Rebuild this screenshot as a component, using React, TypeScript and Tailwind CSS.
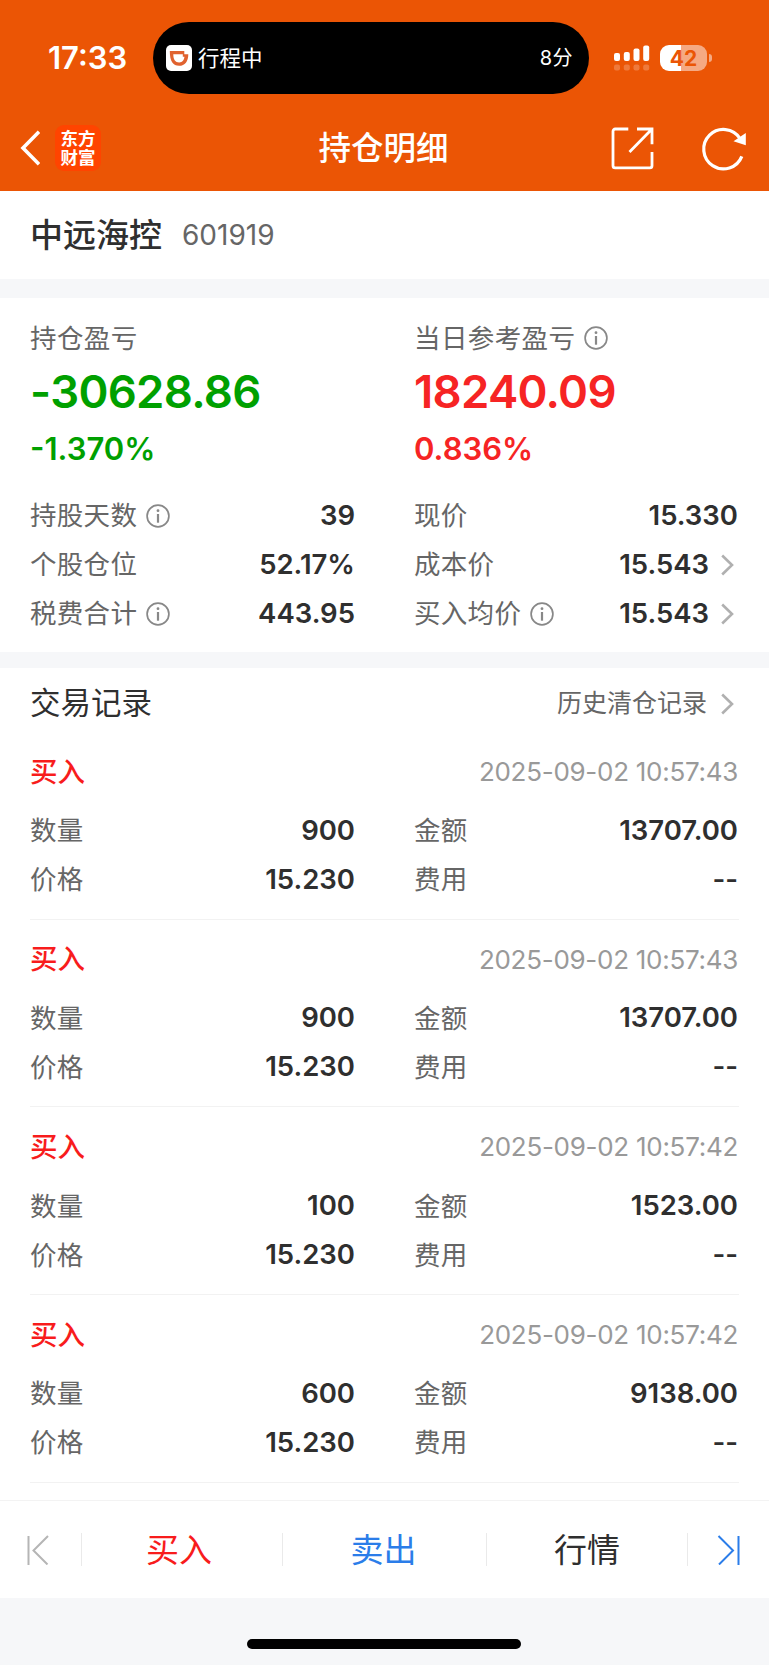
import { clsx } from "clsx";

type Stat = {
  label: string;
  value: string;
  info?: boolean;
  link?: boolean;
};

type Trade = {
  time: string;
  amount: string;
  price: string;
  total: string;
  fee: string;
};

const leftStats: Stat[] = [
  { label: "持股天数", value: "39", info: true },
  { label: "个股仓位", value: "52.17%" },
  { label: "税费合计", value: "443.95", info: true },
];

const rightStats: Stat[] = [
  { label: "现价", value: "15.330" },
  { label: "成本价", value: "15.543", link: true },
  { label: "买入均价", value: "15.543", info: true, link: true },
];

const trades: Trade[] = [
  { time: "2025-09-02 10:57:43", amount: "900", price: "15.230", total: "13707.00", fee: "--" },
  { time: "2025-09-02 10:57:43", amount: "900", price: "15.230", total: "13707.00", fee: "--" },
  { time: "2025-09-02 10:57:42", amount: "100", price: "15.230", total: "1523.00", fee: "--" },
  { time: "2025-09-02 10:57:42", amount: "600", price: "15.230", total: "9138.00", fee: "--" },
];

function InfoIcon() {
  return (
    <svg className="ml-[9px] h-6 w-6 text-[#888]" viewBox="0 0 24 24" fill="none" stroke="currentColor">
      <circle cx="12" cy="12" r="10.9" strokeWidth="1.7" />
      <path d="M12 10v8.7" strokeWidth="2.2" />
      <circle cx="12" cy="6.7" r="1.4" fill="currentColor" stroke="none" />
    </svg>
  );
}

function Chevron() {
  return (
    <svg className="mr-1 ml-3 h-[22px] w-[13px] text-[#b0b0b0]" viewBox="0 0 13 22" fill="none" stroke="currentColor" strokeWidth="2.6">
      <path d="M1.2 1.5 11 11 1.2 20.5" />
    </svg>
  );
}

function StatRow({ label, value, info, link }: Stat) {
  return (
    <div className="flex h-[49px] items-center">
      <span className="text-[26.5px] tracking-[0.3px] text-[#666]">{label}</span>
      {info && <InfoIcon />}
      <span className="ml-auto text-[27.5px] font-semibold text-[#2f2f2f]">{value}</span>
      {link && <Chevron />}
    </div>
  );
}

function StatusBar() {
  return (
    <div className="flex h-[94px] items-start pt-[22px]">
      <div className="flex h-[72px] w-[153px] items-center pb-[2px] pl-12 text-[31px] font-semibold">17:33</div>
      <div className="flex h-[72px] w-[436px] items-center rounded-full bg-black pr-4 pl-[13px]">
        <svg className="h-[26px] w-[26px]" viewBox="0 0 26 26">
          <rect width="26" height="26" rx="5" fill="#fff" />
          <path d="M3.8 6h14.5v3.2h4c0 7.2-3.2 11.6-9.2 11.6C7 20.8 3.8 16.4 3.8 6Z" fill="#e0622f" />
          <path d="M7.3 9.2h9.5v2.6h1.6c-.2 3.400-2 5.600-5.200 5.600C9.400 17.400 7.300 14.800 7.300 9.200Z" fill="#fff" />
        </svg>
        <span className="ml-[6px] pt-[2px] text-[21.5px]">行程中</span>
        <span className="ml-auto text-[20px] tracking-[0.5px]">8分</span>
      </div>
      <div className="flex h-[72px] items-center pl-[25px]">
        <svg className="h-[26px] w-9" viewBox="0 0 36 26" fill="#fff">
          <rect x="0" y="8" width="6" height="8" rx="2" />
          <rect x="9.8" y="7" width="6" height="9" rx="2" />
          <rect x="19.5" y="3.5" width="6" height="12.5" rx="2" />
          <rect x="29.2" y="0.5" width="6" height="15.5" rx="2" />
          <g opacity="0.22">
            <rect x="0" y="19.5" width="6" height="6" rx="2" />
            <rect x="9.8" y="19.5" width="6" height="6" rx="2" />
            <rect x="19.5" y="19.5" width="6" height="6" rx="2" />
            <rect x="29.2" y="19.5" width="6" height="6" rx="2" />
          </g>
        </svg>
        <div className="ml-[10px] flex h-[26px] w-[47px] items-center justify-center rounded-[9px] bg-[linear-gradient(90deg,#fff_44%,#f5a983_44%)] text-[21px] font-bold text-[#eb5505]">
          42
        </div>
        <div className="ml-[1.5px] h-2 w-[3px] rounded-r-full bg-[#f5a983]" />
      </div>
    </div>
  );
}

function NavBar() {
  return (
    <div className="grid h-[97px] grid-cols-[1fr_auto_1fr] items-center">
      <div className="flex items-center pt-[10px] pl-5">
        <svg className="h-9 w-5" viewBox="0 0 20 36" fill="none" stroke="#fff" strokeWidth="3.6">
          <path d="M19 1.8 3 18l16 16.2" />
        </svg>
        <div className="ml-[15px] flex h-[46px] w-[46px] flex-col items-center justify-center rounded-[9px] bg-[#ff4400] text-[17.5px] leading-[19px] font-bold">
          <span>东方</span>
          <span>财富</span>
        </div>
      </div>
      <h1 className="pt-[14px] pr-[2px] text-[32.5px] leading-none font-medium">持仓明细</h1>
      <div className="flex items-center justify-end gap-12 pt-[12px] pr-6">
        <svg className="h-[43px] w-[43px]" viewBox="0 0 43 43" fill="none" stroke="#fff" strokeWidth="2.8">
          <path d="M17.3 2H4.2A2.2 2.2 0 0 0 2 4.2v34.5a2.2 2.2 0 0 0 2.2 2.2h34.6a2.200 2.200 0 0 0 2.200-2.200V25" />
          <path d="M26 2h15v15.300M40.500 2.500 18.500 25" />
        </svg>
        <svg className="h-[43px] w-[43px] overflow-visible" viewBox="0 0 43 43" fill="none" stroke="#fff" strokeWidth="3.2">
          <path d="M39.8 29.300A19.700 19.700 0 1 1 38 11.500" />
          <path d="M43.800 6V18.300L31.500 14.300Z" fill="#fff" stroke="none" />
        </svg>
      </div>
    </div>
  );
}

function TradeItem({ trade }: { trade: Trade }) {
  return (
    <div className="mx-[30px] h-[187.67px] border-b border-[#f2f2f2]">
      <div className="flex h-[74px] items-center justify-between pt-[6px] pr-[1px]">
        <span className="pt-[1px] text-[27.5px] font-medium text-[#f81c1c]">买入</span>
        <span className="text-[26px] tracking-[-0.28px] text-[#999]">{trade.time}</span>
      </div>
      <div className="grid grid-cols-[325px_1fr] gap-x-[59px] pr-[1px]">
        <StatRow label="数量" value={trade.amount} />
        <StatRow label="金额" value={trade.total} />
        <StatRow label="价格" value={trade.price} />
        <StatRow label="费用" value={trade.fee} />
      </div>
    </div>
  );
}

function Tab({ label, className }: { label: string; className: string }) {
  return <div className={clsx("flex items-center justify-center pt-[2px] text-[33px]", className)}>{label}</div>;
}

function Separator() {
  return <div className="h-[33px] w-[1px] bg-[#eaeaea]" />;
}

export default function App() {
  return (
    <div className="flex h-[1665px] w-[769px] flex-col overflow-hidden bg-[#f6f7f9] font-[Inter,'Noto_Sans_CJK_SC',sans-serif] leading-none whitespace-nowrap">
      <header className="h-[191px] shrink-0 bg-[#eb5505] text-white">
        <StatusBar />
        <NavBar />
      </header>

      <section className="flex h-[88px] shrink-0 items-center bg-white pl-[30px]">
        <span className="text-[33px] font-medium text-[#2f2f2f]">中远海控</span>
        <span className="ml-5 text-[28px] text-[#666]">601919</span>
      </section>

      <section className="mt-[19px] grid h-[354px] shrink-0 grid-cols-[325px_1fr] content-start gap-x-[59px] bg-white pr-[31px] pl-[30px]">
        <div>
          <div className="flex h-[66px] items-center pt-[14px] text-[26.5px] tracking-[0.4px] text-[#666]">持仓盈亏</div>
          <div className="flex h-[56px] items-center text-[45.5px] font-semibold tracking-[-0.7px] text-[#00a000]">-30628.86</div>
          <div className="mb-[13px] flex h-[58px] items-center pb-[1px] text-[31px] font-semibold text-[#00a000]">-1.370%</div>
          {leftStats.map((s) => (
            <StatRow key={s.label} {...s} />
          ))}
        </div>
        <div>
          <div className="flex h-[66px] items-center pt-[14px] text-[26.5px] tracking-[0.4px] text-[#666]">
            当日参考盈亏
            <InfoIcon />
          </div>
          <div className="flex h-[56px] items-center text-[45.5px] font-semibold tracking-[-0.7px] text-[#f62424]">18240.09</div>
          <div className="mb-[13px] flex h-[58px] items-center pb-[1px] text-[31px] font-semibold text-[#f62424]">0.836%</div>
          {rightStats.map((s) => (
            <StatRow key={s.label} {...s} />
          ))}
        </div>
      </section>

      <section className="mt-4 h-[832px] shrink-0 overflow-hidden bg-white">
        <div className="flex h-[64px] items-center pt-[7px] pr-[31px] pl-[30px]">
          <h2 className="text-[30.5px] text-[#2f2f2f]">交易记录</h2>
          <span className="mr-[2px] ml-auto text-[25px] text-[#666]">历史清仓记录</span>
          <Chevron />
        </div>
        {trades.map((t, i) => (
          <TradeItem key={i} trade={t} />
        ))}
      </section>

      <nav className="grid h-[98px] shrink-0 grid-cols-[81px_1px_200px_1px_203px_1px_200px_1px_81px] items-center border-t border-[#f3f3f3] bg-white">
        <div className="flex pl-[26px]">
          <svg className="h-[30px] w-6" viewBox="0 0 24 30" fill="none" stroke="#b5b5b5" strokeWidth="2">
            <path d="M2.5 1v29M22 1 7.5 15.5l14 14" />
          </svg>
        </div>
        <Separator />
        <Tab label="买入" className="pr-[6px] text-[#f81c1c]" />
        <Separator />
        <Tab label="卖出" className="pr-[2px] text-[#2b7de9]" />
        <Separator />
        <Tab label="行情" className="text-[#2f2f2f]" />
        <Separator />
        <div className="flex justify-end pr-[29px]">
          <svg className="h-[30px] w-6" viewBox="0 0 24 30" fill="none" stroke="#2b7de9" strokeWidth="2">
            <path d="M22.5 1v29M2.5 1 17 15.5l-14 14" />
          </svg>
        </div>
      </nav>

      <footer className="flex flex-1 items-end justify-center pr-[1px] pb-4">
        <div className="h-[10px] w-[274px] rounded-full bg-black" />
      </footer>
    </div>
  );
}
